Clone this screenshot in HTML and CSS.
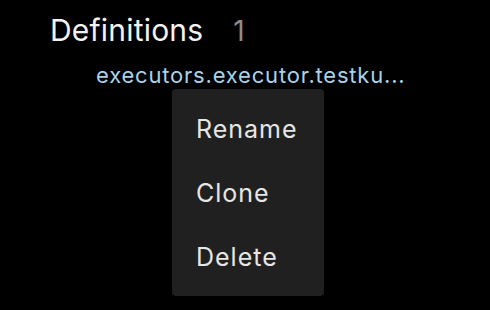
FILE: index.html
```html
<!DOCTYPE html>
<html lang="en">
<head>
  <meta charset="UTF-8">
  <title>Definitions</title>
  <link rel="stylesheet" href="styles.css">
</head>
<body>
  <div class="panel">
    <div class="panel-header">
      <h2>Definitions</h2>
      <span class="count">1</span>
    </div>

    <div class="definition">
      <a class="definition-link" href="#">executors.executor.testku...</a>

      <div class="popup">
        <div class="popup-item">Rename</div>
        <div class="popup-item">Clone</div>
        <div class="popup-item">Delete</div>
      </div>
    </div>
  </div>
</body>
</html>
```

FILE: styles.css
```css
html,
body {
  height: 100%;
}

body {
  margin: 0;
  background-color: #000;
  font-family: Inter, "Noto Sans", sans-serif;
  color: #e6e6e6;
}

.panel {
  min-height: 310px;
  box-sizing: border-box;
  padding: 8px 0 0 50px;
}

.panel-header {
  display: flex;
  align-items: baseline;
  gap: 30px;
}

.panel-header h2 {
  margin: 0;
  font-size: 30px;
  font-weight: 400;
  line-height: 44px;
  letter-spacing: 0.2px;
  color: #f2f2f2;
}

.count {
  font-size: 28px;
  color: #8c8c8c;
}

.definition {
  position: relative;
  padding: 8px 0 0 46px;
}

.definition-link {
  font-size: 22px;
  line-height: 30px;
  letter-spacing: 0.8px;
  color: #a9d2ea;
  text-decoration: none;
}

.popup {
  position: absolute;
  left: 122px;
  top: 37px;
  width: 152px;
  height: 207px;
  padding: 8px 0;
  box-sizing: border-box;
  background-color: #202020;
  border-radius: 4px;
}

.popup-item {
  padding: 0 24px;
  font-size: 25px;
  line-height: 64px;
  letter-spacing: 1px;
  color: #e6e6e6;
}
```
